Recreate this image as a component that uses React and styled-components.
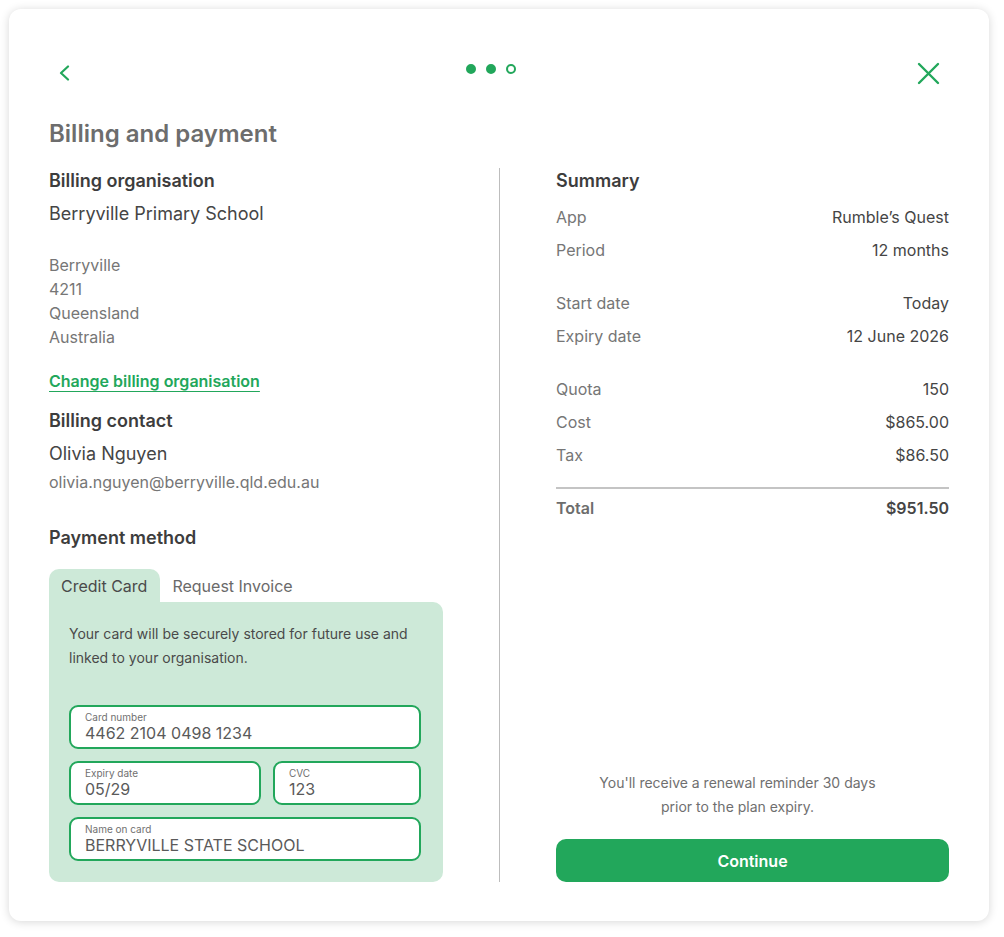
import React from "react";
import styled, { createGlobalStyle } from "styled-components";

const GREEN = "#22a75b";

const GlobalStyle = createGlobalStyle`
  html, body {
    margin: 0;
    padding: 0;
    background: #ffffff;
    font-family: Inter, "Noto Sans", sans-serif;
  }
  * { box-sizing: border-box; }
`;

const Page = styled.div`
  padding: 9px 15px 16px 9px;
`;

const Card = styled.div`
  width: 980px;
  height: 912px;
  background: #fff;
  border-radius: 12px;
  box-shadow: 0 1px 10px rgba(0, 0, 0, 0.16);
  padding: 40px 40px 39px;
  display: flex;
  flex-direction: column;
`;

const Header = styled.div`
  height: 48px;
  padding: 0 9px;
  display: flex;
  align-items: center;
  justify-content: space-between;
`;

const IconButton = styled.button`
  border: none;
  background: none;
  padding: 0;
  width: ${({ $w }) => $w}px;
  height: 32px;
  display: flex;
  align-items: center;
  justify-content: ${({ $end }) => ($end ? "flex-end" : "flex-start")};
  cursor: pointer;
`;

const Dots = styled.div`
  display: flex;
  gap: 10px;
  align-self: flex-start;
  margin-top: 15px;
`;

const Dot = styled.span`
  width: 10px;
  height: 10px;
  border-radius: 50%;
  border: 2px solid ${GREEN};
  background: ${({ $filled }) => ($filled ? GREEN : "transparent")};
`;

const Title = styled.h1`
  margin: 21px 0 18px;
  font-size: 24px;
  line-height: 32px;
  font-weight: 600;
  color: #6d6d6d;
`;

const Columns = styled.div`
  flex: 1;
  display: grid;
  grid-template-columns: 394px 1px 1fr;
  column-gap: 56px;
`;

const Column = styled.div`
  display: flex;
  flex-direction: column;
`;

const Divider = styled.div`
  background: #bdbdbd;
`;

const Heading = styled.h2`
  margin: ${({ $mt }) => $mt || 0}px 0 0;
  font-size: 18px;
  line-height: 26px;
  font-weight: 600;
  color: #3d3d3d;
`;

const Name = styled.div`
  margin-top: 7px;
  font-size: 18px;
  line-height: 26px;
  color: #454545;
`;

const Muted = styled.div`
  margin-top: ${({ $mt }) => $mt || 0}px;
  font-size: 16px;
  line-height: 24px;
  color: #767676;
`;

const Link = styled.a`
  margin-top: 20px;
  align-self: flex-start;
  font-size: 16px;
  line-height: 24px;
  font-weight: 600;
  color: ${GREEN};
  text-decoration: underline;
  text-underline-offset: 4px;
  text-decoration-thickness: 1px;
  cursor: pointer;
`;

const Tabs = styled.div`
  margin-top: 18px;
  display: flex;
`;

const Tab = styled.div`
  height: 33px;
  padding: 0 13px 0 12px;
  display: flex;
  align-items: center;
  font-size: 16px;
  color: ${({ $active }) => ($active ? "#4a4a4a" : "#6a6a6a")};
  background: ${({ $active }) => ($active ? "#cde9d8" : "transparent")};
  border-radius: 10px 10px 0 0;
  cursor: pointer;
`;

const Panel = styled.div`
  background: #cde9d8;
  border-radius: 0 10px 10px 10px;
  padding: 20px 22px 21px 20px;
`;

const PanelText = styled.p`
  margin: 0 0 35px;
  font-size: 14px;
  line-height: 24px;
  color: #4a4a4a;
`;

const Fields = styled.div`
  display: grid;
  grid-template-columns: 1fr 148px;
  gap: 12px;
`;

const Field = styled.label`
  grid-column: ${({ $full }) => ($full ? "1 / -1" : "auto")};
  height: 44px;
  background: #fff;
  border: 2px solid ${GREEN};
  border-radius: 9px;
  padding: 4px 14px;
  display: flex;
  flex-direction: column;
`;

const FieldLabel = styled.span`
  font-size: 10px;
  line-height: 12px;
  color: #707070;
`;

const FieldValue = styled.span`
  font-size: 16px;
  line-height: 21px;
  color: #5a5a5a;
`;

const Rows = styled.div`
  margin-top: ${({ $mt }) => $mt}px;
  display: flex;
  flex-direction: column;
  gap: 9px;
`;

const Row = styled.div`
  display: flex;
  justify-content: space-between;
  font-size: 16px;
  line-height: 24px;
  font-weight: ${({ $bold }) => ($bold ? 600 : 400)};
  color: #454545;
`;

const RowLabel = styled.span`
  color: ${({ $bold }) => ($bold ? "#6d6d6d" : "#767676")};
`;

const Rule = styled.hr`
  margin: 20px 0 7px;
  border: none;
  border-top: 2px solid #c4c4c4;
`;

const Footer = styled.div`
  margin-top: auto;
  display: flex;
  flex-direction: column;
  align-items: center;
  gap: 20px;
`;

const Note = styled.p`
  margin: 0;
  padding-right: 30px;
  text-align: center;
  font-size: 14px;
  line-height: 24px;
  color: #6f6f6f;
`;

const PrimaryButton = styled.button`
  width: 100%;
  height: 43px;
  border: none;
  border-radius: 10px;
  background: ${GREEN};
  color: #fff;
  font-family: inherit;
  font-size: 16px;
  font-weight: 600;
  cursor: pointer;
`;

const summary = [
  [["App", "Rumble’s Quest"], ["Period", "12 months"]],
  [["Start date", "Today"], ["Expiry date", "12 June 2026"]],
  [["Quota", "150"], ["Cost", "$865.00"], ["Tax", "$86.50"]],
];

const App = () => {
  return (
    <Page>
      <GlobalStyle />
      <Card>
        <Header>
          <IconButton $w={16} aria-label="Back">
            <svg width="12" height="16" viewBox="0 0 12 16" fill="none">
              <path d="M10 1.5 L3 8 L10 14.5" stroke={GREEN} strokeWidth="2.2" strokeLinecap="round" strokeLinejoin="round" />
            </svg>
          </IconButton>
          <Dots>
            <Dot $filled />
            <Dot $filled />
            <Dot />
          </Dots>
          <IconButton $w={32} $end aria-label="Close">
            <svg width="23" height="23" viewBox="0 0 23 23" fill="none">
              <path d="M2 2 L21 21 M21 2 L2 21" stroke={GREEN} strokeWidth="2.4" strokeLinecap="round" />
            </svg>
          </IconButton>
        </Header>

        <Title>Billing and payment</Title>

        <Columns>
          <Column>
            <Heading>Billing organisation</Heading>
            <Name>Berryville Primary School</Name>
            <Muted $mt={26}>
              Berryville
              <br />
              4211
              <br />
              Queensland
              <br />
              Australia
            </Muted>
            <Link>Change billing organisation</Link>

            <Heading $mt={15}>Billing contact</Heading>
            <Name>Olivia Nguyen</Name>
            <Muted $mt={3}>olivia.nguyen@berryville.qld.edu.au</Muted>

            <Heading $mt={31}>Payment method</Heading>
            <Tabs>
              <Tab $active>Credit Card</Tab>
              <Tab>Request Invoice</Tab>
            </Tabs>
            <Panel>
              <PanelText>
                Your card will be securely stored for future use and
                <br />
                linked to your organisation.
              </PanelText>
              <Fields>
                <Field $full>
                  <FieldLabel>Card number</FieldLabel>
                  <FieldValue>4462 2104 0498 1234</FieldValue>
                </Field>
                <Field>
                  <FieldLabel>Expiry date</FieldLabel>
                  <FieldValue>05/29</FieldValue>
                </Field>
                <Field>
                  <FieldLabel>CVC</FieldLabel>
                  <FieldValue>123</FieldValue>
                </Field>
                <Field $full>
                  <FieldLabel>Name on card</FieldLabel>
                  <FieldValue>BERRYVILLE STATE SCHOOL</FieldValue>
                </Field>
              </Fields>
            </Panel>
          </Column>

          <Divider />

          <Column>
            <Heading>Summary</Heading>
            {summary.map((group, i) => (
              <Rows key={i} $mt={i === 0 ? 11 : 29}>
                {group.map(([label, value]) => (
                  <Row key={label}>
                    <RowLabel>{label}</RowLabel>
                    <span>{value}</span>
                  </Row>
                ))}
              </Rows>
            ))}
            <Rule />
            <Row $bold>
              <RowLabel $bold>Total</RowLabel>
              <span>$951.50</span>
            </Row>

            <Footer>
              <Note>
                You'll receive a renewal reminder 30 days
                <br />
                prior to the plan expiry.
              </Note>
              <PrimaryButton>Continue</PrimaryButton>
            </Footer>
          </Column>
        </Columns>
      </Card>
    </Page>
  );
};

export default App;
